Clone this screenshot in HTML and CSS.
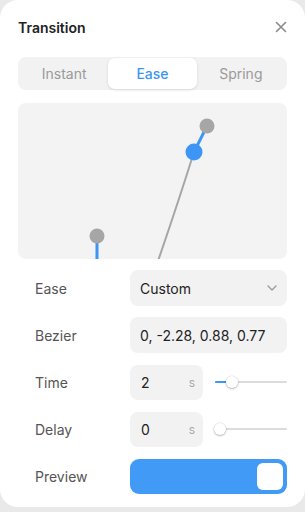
FILE: index.html
```html
<!DOCTYPE html>
<html>
<head>
<meta charset="utf-8">
<link rel="stylesheet" href="styles.css">
</head>
<body>
<div class="panel">
  <div class="header">
    <span class="title">Transition</span>
    <svg class="close" width="12" height="12" viewBox="0 0 12 12"><path d="M1.5 1.5 L10.5 10.5 M10.5 1.5 L1.5 10.5" stroke="#8a8a8a" stroke-width="1.6" stroke-linecap="round"/></svg>
  </div>
  <div class="seg">
    <div class="seg-item">Instant</div>
    <div class="seg-item active">Ease</div>
    <div class="seg-item">Spring</div>
  </div>
  <div class="graph">
    <svg width="269" height="156" viewBox="0 0 269 156">
      <path d="M140 158 Q160 100 176 49" stroke="#a6a6a6" stroke-width="2" fill="none"/>
      <line x1="79" y1="133" x2="79" y2="160" stroke="#3d96f5" stroke-width="3"/>
      <line x1="176" y1="49" x2="189" y2="23" stroke="#3d96f5" stroke-width="3"/>
      <circle cx="79" cy="133" r="7.5" fill="#a6a6a6"/>
      <circle cx="189" cy="23" r="7.5" fill="#a6a6a6"/>
      <circle cx="176" cy="49" r="8.5" fill="#3d96f5"/>
    </svg>
  </div>
  <div class="rows">
    <div class="row">
      <span class="label">Ease</span>
      <div class="box select">
        <span>Custom</span>
        <svg width="10" height="6" viewBox="0 0 10 6"><path d="M1 1 L5 5 L9 1" stroke="#999" stroke-width="1.3" fill="none" stroke-linecap="round" stroke-linejoin="round"/></svg>
      </div>
    </div>
    <div class="row">
      <span class="label">Bezier</span>
      <div class="box"><span>0, -2.28, 0.88, 0.77</span></div>
    </div>
    <div class="row">
      <span class="label">Time</span>
      <div class="pair">
        <div class="box num"><span>2</span><span class="unit">s</span></div>
        <div class="slider"><div class="fill" style="width:17px"></div><div class="thumb" style="left:17px"></div></div>
      </div>
    </div>
    <div class="row">
      <span class="label">Delay</span>
      <div class="pair">
        <div class="box num"><span>0</span><span class="unit">s</span></div>
        <div class="slider"><div class="fill" style="width:5px"></div><div class="thumb" style="left:5px"></div></div>
      </div>
    </div>
    <div class="row">
      <span class="label">Preview</span>
      <div class="toggle"><div class="knob"></div></div>
    </div>
  </div>
</div>
</body>
</html>
```

FILE: styles.css
```css
* { box-sizing: border-box; }
body {
  margin: 0;
  background: #e9e9e9;
  font-family: Inter, "Noto Sans", sans-serif;
  width: 305px;
  height: 512px;
  overflow: hidden;
}
.panel {
  width: 305px;
  height: 507px;
  background: #fff;
  border-radius: 18px;
  padding: 17px 18px 0 18px;
}
.header {
  height: 20px;
  display: flex;
  align-items: center;
  justify-content: space-between;
}
.title {
  font-size: 14px;
  font-weight: 600;
  color: #222;
}
.close { margin-right: 0; }
.seg {
  margin-top: 20px;
  height: 33px;
  background: #f2f2f2;
  border-radius: 8px;
  padding: 1px 2px;
  display: grid;
  grid-template-columns: 1fr 1fr 1fr;
}
.seg-item {
  display: flex;
  align-items: center;
  justify-content: center;
  font-size: 14px;
  color: #9a9a9a;
  border-radius: 7px;
}
.seg-item.active {
  background: #fff;
  color: #3d96f5;
  font-weight: 500;
  box-shadow: 0 1px 3px rgba(0,0,0,0.12);
}
.graph {
  margin-top: 13px;
  height: 156px;
  background: #f3f3f3;
  border-radius: 8px;
  overflow: hidden;
}
.graph svg { display: block; }
.rows {
  margin-top: 11px;
  display: flex;
  flex-direction: column;
  gap: 11px;
}
.row {
  display: grid;
  grid-template-columns: 112px 1fr;
  align-items: center;
  height: 36px;
}
.label {
  padding-left: 17px;
  font-size: 14px;
  color: #555;
}
.box {
  height: 36px;
  background: #f2f2f2;
  border-radius: 8px;
  display: flex;
  align-items: center;
  padding: 0 10px;
  font-size: 14px;
  color: #222;
}
.select { justify-content: space-between; padding-right: 10px; }
.pair {
  display: grid;
  grid-template-columns: 73px 1fr;
  gap: 12px;
  align-items: center;
}
.num {
  justify-content: space-between;
  padding: 0 8px 0 11px;
  height: 35px;
}
.unit { color: #aaa; font-size: 12px; }
.slider {
  position: relative;
  height: 2px;
  background: #dcdcdc;
  border-radius: 1px;
}
.fill {
  height: 2px;
  background: #3d96f5;
  border-radius: 1px;
}
.thumb {
  position: absolute;
  top: -5px;
  width: 12px;
  height: 12px;
  margin-left: -6px;
  border-radius: 50%;
  background: #fff;
  box-shadow: 0 0 0 0.5px rgba(0,0,0,0.1), 0 1px 2px rgba(0,0,0,0.25);
}
.toggle {
  height: 35px;
  background: #409af6;
  border-radius: 9px;
  display: flex;
  justify-content: flex-end;
  align-items: center;
  padding-right: 4px;
}
.knob {
  width: 26px;
  height: 27px;
  background: #fff;
  border-radius: 6px;
}
```
